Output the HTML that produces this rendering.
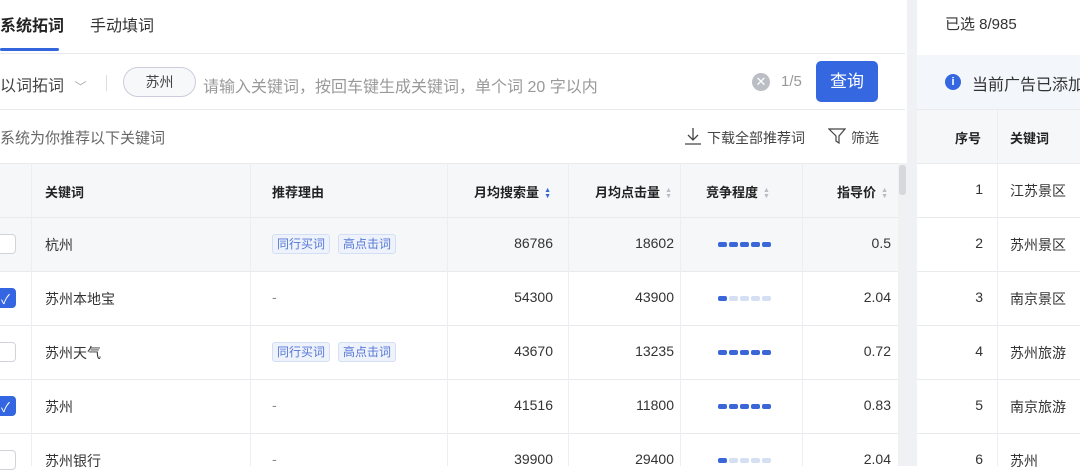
<!DOCTYPE html><html><head><meta charset="utf-8"><style>
*{box-sizing:border-box;margin:0;padding:0}
body{width:1080px;height:466px;overflow:hidden;background:#fff;font-family:"Liberation Sans","Noto Sans CJK SC",sans-serif;color:#333;font-size:14px;position:relative}
.a{position:absolute}
.hl{position:absolute;height:1px;background:#e8eaee}
.vl{position:absolute;width:1px;background:#eceef2}
.th{font-weight:bold;color:#222;font-size:13px}
.cb{position:absolute;left:-4px;width:20px;height:20px;border:1px solid #d0d3d9;border-radius:4px;background:#fff}
.cb.on{background:#3366e0;border-color:#3366e0}
.tag{display:inline-block;font-size:12px;color:#5577d6;background:#eef2fb;border:1px solid #d4def5;border-radius:3px;padding:0 4px;line-height:18px;margin-right:8px}
.bar{position:absolute;left:718px;display:flex;gap:2px}
.bar i{display:block;width:9px;height:5px;border-radius:2px;background:#3a66d8}
.bar.l i{background:#d5e0f5}.bar.l i:first-child{background:#3a66d8}
.r{text-align:right}
.sort{display:inline-block;font-size:7px;color:#b8bcc4;line-height:6px;vertical-align:middle;margin-left:5px}
</style></head><body>
<div class="a" style="left:0;top:12px;font-size:16px;font-weight:bold;color:#222">系统拓词</div>
<div class="a" style="left:90px;top:12px;font-size:16px;color:#333">手动填词</div>
<div class="a" style="left:0;top:48px;width:59px;height:3px;background:#3366dd;border-radius:2px"></div>
<div class="hl" style="left:0;top:53px;width:905px"></div>
<div class="a" style="left:0;top:72px;font-size:16px;color:#444">以词拓词 <span style="color:#aaa;font-size:12px;margin-left:6px">﹀</span></div>
<div class="a" style="left:106px;top:75px;width:1px;height:16px;background:#ddd"></div>
<div class="a" style="left:123px;top:67px;width:73px;height:30px;border:1px solid #ccd;border-radius:15px;background:#f7f8fa;text-align:center;line-height:28px;font-size:14px;color:#444">苏州</div>
<div class="a" style="left:203px;top:73px;font-size:16px;color:#999">请输入关键词，按回车键生成关键词，单个词 20 字以内</div>
<div class="a" style="left:752px;top:73px;width:18px;height:18px;border-radius:50%;background:#bbbec4;color:#fff;font-size:13px;text-align:center;line-height:18px">✕</div>
<div class="a" style="left:781px;top:73px;font-size:15px;color:#999">1/5</div>
<div class="a" style="left:816px;top:61px;width:62px;height:41px;border-radius:5px;background:#3568e0;color:#fff;font-size:17px;text-align:center;line-height:41px">查询</div>
<div class="hl" style="left:0;top:109px;width:905px"></div>
<div class="a" style="left:0;top:127px;font-size:15px;color:#666">系统为你推荐以下关键词</div>
<svg class="a" style="left:684px;top:127px" width="18" height="18" viewBox="0 0 18 18"><path d="M9 1v12M4 8l5 5 5-5M1 17h16" stroke="#444" stroke-width="1.3" fill="none"/></svg>
<div class="a" style="left:707px;top:128px;font-size:14px;color:#444">下载全部推荐词</div>
<svg class="a" style="left:828px;top:127px" width="18" height="18" viewBox="0 0 18 18"><path d="M1 2h16l-6 7v7l-3-2V9z" stroke="#444" stroke-width="1.2" fill="none"/></svg>
<div class="a" style="left:851px;top:128px;font-size:14px;color:#444">筛选</div>
<div class="a" style="left:0;top:163px;width:898px;height:54px;background:#f6f7f9"></div>
<div class="a" style="left:0;top:217px;width:898px;height:54px;background:#f6f7f9"></div>
<div class="hl" style="left:0;top:163px;width:898px"></div>
<div class="hl" style="left:0;top:217px;width:898px"></div>
<div class="hl" style="left:0;top:271px;width:898px"></div>
<div class="hl" style="left:0;top:325px;width:898px"></div>
<div class="hl" style="left:0;top:379px;width:898px"></div>
<div class="hl" style="left:0;top:433px;width:898px"></div>
<div class="vl" style="left:31px;top:163px;height:303px"></div>
<div class="vl" style="left:250px;top:163px;height:303px"></div>
<div class="vl" style="left:447px;top:163px;height:303px"></div>
<div class="vl" style="left:568px;top:163px;height:303px"></div>
<div class="vl" style="left:680px;top:163px;height:303px"></div>
<div class="vl" style="left:802px;top:163px;height:303px"></div>
<div class="a" style="left:898px;top:163px;width:9px;height:303px;background:#f0f1f3"></div>
<div class="a" style="left:899px;top:165px;width:7px;height:30px;background:#d6d8dc;border-radius:3px"></div>
<div class="a th" style="left:45px;top:182px">关键词</div>
<div class="a th" style="left:272px;top:182px">推荐理由</div>
<div class="a th r" style="left:447px;top:182px;width:104px">月均搜索量<span class="sort" style="color:#3a66d8">▲<br>▼</span></div>
<div class="a th r" style="left:568px;top:182px;width:104px">月均点击量<span class="sort">▲<br>▼</span></div>
<div class="a th" style="left:706px;top:182px">竞争程度<span class="sort">▲<br>▼</span></div>
<div class="a th r" style="left:802px;top:182px;width:86px">指导价<span class="sort">▲<br>▼</span></div>

<div class="cb" style="top:234px"></div>
<div class="a" style="left:45px;top:235px;font-size:14px">杭州</div>
<div class="a" style="left:272px;top:234px"><span class="tag">同行买词</span><span class="tag">高点击词</span></div>
<div class="a r" style="left:447px;top:235px;width:106px">86786</div>
<div class="a r" style="left:568px;top:235px;width:106px">18602</div>
<div class="bar" style="top:242px"><i></i><i></i><i></i><i></i><i></i></div>
<div class="a r" style="left:802px;top:235px;width:89px">0.5</div>

<div class="cb on" style="top:288px"><span style="color:#fff;font-size:13px;position:absolute;left:4px;top:0">✓</span></div>
<div class="a" style="left:45px;top:289px">苏州本地宝</div>
<div class="a" style="left:272px;top:289px;color:#888">-</div>
<div class="a r" style="left:447px;top:289px;width:106px">54300</div>
<div class="a r" style="left:568px;top:289px;width:106px">43900</div>
<div class="bar l" style="top:296px"><i></i><i></i><i></i><i></i><i></i></div>
<div class="a r" style="left:802px;top:289px;width:89px">2.04</div>

<div class="cb" style="top:342px"></div>
<div class="a" style="left:45px;top:343px">苏州天气</div>
<div class="a" style="left:272px;top:342px"><span class="tag">同行买词</span><span class="tag">高点击词</span></div>
<div class="a r" style="left:447px;top:343px;width:106px">43670</div>
<div class="a r" style="left:568px;top:343px;width:106px">13235</div>
<div class="bar" style="top:350px"><i></i><i></i><i></i><i></i><i></i></div>
<div class="a r" style="left:802px;top:343px;width:89px">0.72</div>

<div class="cb on" style="top:396px"><span style="color:#fff;font-size:13px;position:absolute;left:4px;top:0">✓</span></div>
<div class="a" style="left:45px;top:397px">苏州</div>
<div class="a" style="left:272px;top:397px;color:#888">-</div>
<div class="a r" style="left:447px;top:397px;width:106px">41516</div>
<div class="a r" style="left:568px;top:397px;width:106px">11800</div>
<div class="bar" style="top:404px"><i></i><i></i><i></i><i></i><i></i></div>
<div class="a r" style="left:802px;top:397px;width:89px">0.83</div>

<div class="cb" style="top:450px"></div>
<div class="a" style="left:45px;top:451px">苏州银行</div>
<div class="a" style="left:272px;top:451px;color:#888">-</div>
<div class="a r" style="left:447px;top:451px;width:106px">39900</div>
<div class="a r" style="left:568px;top:451px;width:106px">29400</div>
<div class="bar l" style="top:458px"><i></i><i></i><i></i><i></i><i></i></div>
<div class="a r" style="left:802px;top:451px;width:89px">2.04</div>

<div class="a" style="left:907px;top:0;width:10px;height:466px;background:#f0f1f4"></div>
<div class="a" style="left:945px;top:13px;font-size:15px;color:#333">已选 8/985</div>
<div class="a" style="left:917px;top:55px;width:163px;height:54px;background:#f3f6fb"></div>
<div class="a" style="left:945px;top:74px;width:16px;height:16px;border-radius:50%;background:#3568e0;color:#fff;font-size:11px;font-weight:bold;text-align:center;line-height:16px">i</div>
<div class="a" style="left:972px;top:71px;font-size:16px;color:#333;white-space:nowrap">当前广告已添加</div>
<div class="a" style="left:917px;top:110px;width:163px;height:53px;background:#f6f7f9"></div>
<div class="hl" style="left:917px;top:109px;width:163px"></div>
<div class="hl" style="left:917px;top:163px;width:163px"></div>
<div class="hl" style="left:917px;top:217px;width:163px"></div>
<div class="hl" style="left:917px;top:271px;width:163px"></div>
<div class="hl" style="left:917px;top:325px;width:163px"></div>
<div class="hl" style="left:917px;top:379px;width:163px"></div>
<div class="hl" style="left:917px;top:433px;width:163px"></div>
<div class="vl" style="left:997px;top:110px;height:356px"></div>
<div class="a th" style="left:955px;top:128px">序号</div>
<div class="a th" style="left:1010px;top:128px">关键词</div>
<div class="a r" style="left:917px;top:181px;width:66px">1</div><div class="a" style="left:1010px;top:181px">江苏景区</div>
<div class="a r" style="left:917px;top:235px;width:66px">2</div><div class="a" style="left:1010px;top:235px">苏州景区</div>
<div class="a r" style="left:917px;top:289px;width:66px">3</div><div class="a" style="left:1010px;top:289px">南京景区</div>
<div class="a r" style="left:917px;top:343px;width:66px">4</div><div class="a" style="left:1010px;top:343px">苏州旅游</div>
<div class="a r" style="left:917px;top:397px;width:66px">5</div><div class="a" style="left:1010px;top:397px">南京旅游</div>
<div class="a r" style="left:917px;top:451px;width:66px">6</div><div class="a" style="left:1010px;top:451px">苏州</div>
</body></html>
